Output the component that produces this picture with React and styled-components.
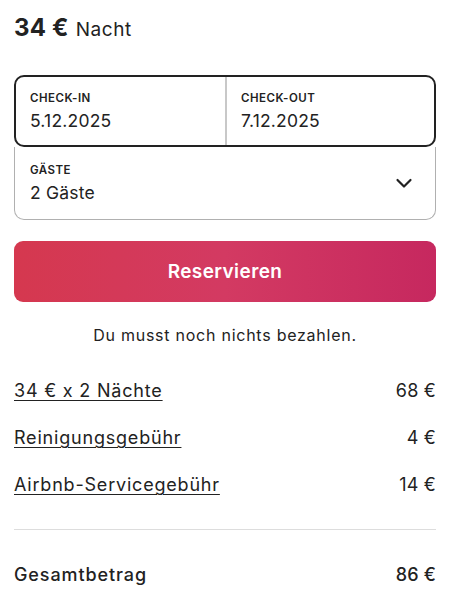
import React from "react";
import styled, { createGlobalStyle } from "styled-components";

const GlobalStyle = createGlobalStyle`
  html, body {
    margin: 0;
    padding: 0;
    background: #ffffff;
  }
  body {
    font-family: Inter, "Noto Sans", "Liberation Sans", sans-serif;
    color: #222222;
    -webkit-font-smoothing: antialiased;
  }
`;

const Page = styled.div`
  width: 422px;
  padding: 12px 14px 0 14px;
  display: flex;
  flex-direction: column;
`;

const PriceLine = styled.div`
  display: flex;
  align-items: baseline;
  gap: 7px;
  height: 32px;
  line-height: 32px;
`;

const Price = styled.span`
  font-size: 24px;
  font-weight: 700;
  letter-spacing: 0.2px;
`;

const Unit = styled.span`
  font-size: 19px;
  font-weight: 400;
  letter-spacing: 0.6px;
`;

const Picker = styled.div`
  margin-top: 31px;
  display: flex;
  flex-direction: column;
`;

const Dates = styled.div`
  display: grid;
  grid-template-columns: 1fr 1fr;
  border: 2px solid #222222;
  border-radius: 10px;
  height: 72px;
  box-sizing: border-box;
`;

const Field = styled.div`
  display: flex;
  flex-direction: column;
  justify-content: center;
  padding: 0 14px;
  border-left: ${(p) => (p.$divider ? "2px solid #c8c8c8" : "none")};
`;

const Label = styled.div`
  font-size: 11.5px;
  font-weight: 600;
  letter-spacing: 0.5px;
  line-height: 14px;
`;

const Value = styled.div`
  font-size: 17.5px;
  line-height: 22px;
  letter-spacing: 0.2px;
  margin-top: 5px;
`;

const Guests = styled.div`
  display: flex;
  align-items: center;
  justify-content: space-between;
  height: 73px;
  border: 1px solid #b0b0b0;
  border-top: none;
  border-radius: 0 0 10px 10px;
  box-sizing: border-box;
  padding: 0 22px 0 15px;
`;

const GuestField = styled.div`
  display: flex;
  flex-direction: column;
`;

const Reserve = styled.button`
  margin-top: 21px;
  height: 61px;
  border: none;
  border-radius: 9px;
  background: linear-gradient(90deg, #d5384f 0%, #d33a62 50%, #c6285f 100%);
  color: #ffffff;
  font-family: inherit;
  font-size: 19px;
  font-weight: 600;
  letter-spacing: 0.4px;
  cursor: pointer;
`;

const Note = styled.div`
  text-align: center;
  font-size: 16px;
  letter-spacing: 0.75px;
  margin-top: 22px;
  line-height: 22px;
`;

const Lines = styled.div`
  margin-top: 33px;
  display: flex;
  flex-direction: column;
  gap: 23px;
`;

const Row = styled.div`
  display: flex;
  justify-content: space-between;
  align-items: center;
  font-size: 18px;
  line-height: 24px;
  letter-spacing: ${(p) => (p.$total ? "0.9px" : "0.8px")};
  font-weight: ${(p) => (p.$total ? 500 : 400)};
`;

const Linked = styled.span`
  text-decoration: underline;
  text-underline-offset: 3px;
  text-decoration-thickness: 1px;
`;

const Amount = styled.span`
  letter-spacing: 0.2px;
`;

const Rule = styled.hr`
  border: none;
  border-top: 1px solid #dddddd;
  margin: 32px 0 0 0;
`;

const TotalRow = styled(Row)`
  margin-top: 33px;
`;

const Chevron = () => (
  <svg width="18" height="18" viewBox="0 0 18 18" fill="none">
    <path
      d="M2.5 6 L9 12.5 L15.5 6"
      stroke="#222222"
      strokeWidth="2.2"
      strokeLinecap="round"
      strokeLinejoin="round"
    />
  </svg>
);

const fees = [
  { label: "34 € x 2 Nächte", amount: "68 €" },
  { label: "Reinigungsgebühr", amount: "4 €" },
  { label: "Airbnb-Servicegebühr", amount: "14 €" },
];

export default function App() {
  return (
    <>
      <GlobalStyle />
      <Page>
        <PriceLine>
          <Price>34 €</Price>
          <Unit>Nacht</Unit>
        </PriceLine>

        <Picker>
          <Dates>
            <Field>
              <Label>CHECK-IN</Label>
              <Value>5.12.2025</Value>
            </Field>
            <Field $divider>
              <Label>CHECK-OUT</Label>
              <Value>7.12.2025</Value>
            </Field>
          </Dates>
          <Guests>
            <GuestField>
              <Label>GÄSTE</Label>
              <Value>2 Gäste</Value>
            </GuestField>
            <Chevron />
          </Guests>
        </Picker>

        <Reserve>Reservieren</Reserve>
        <Note>Du musst noch nichts bezahlen.</Note>

        <Lines>
          {fees.map((f) => (
            <Row key={f.label}>
              <Linked>{f.label}</Linked>
              <Amount>{f.amount}</Amount>
            </Row>
          ))}
        </Lines>

        <Rule />

        <TotalRow $total>
          <span>Gesamtbetrag</span>
          <Amount>86 €</Amount>
        </TotalRow>
      </Page>
    </>
  );
}
